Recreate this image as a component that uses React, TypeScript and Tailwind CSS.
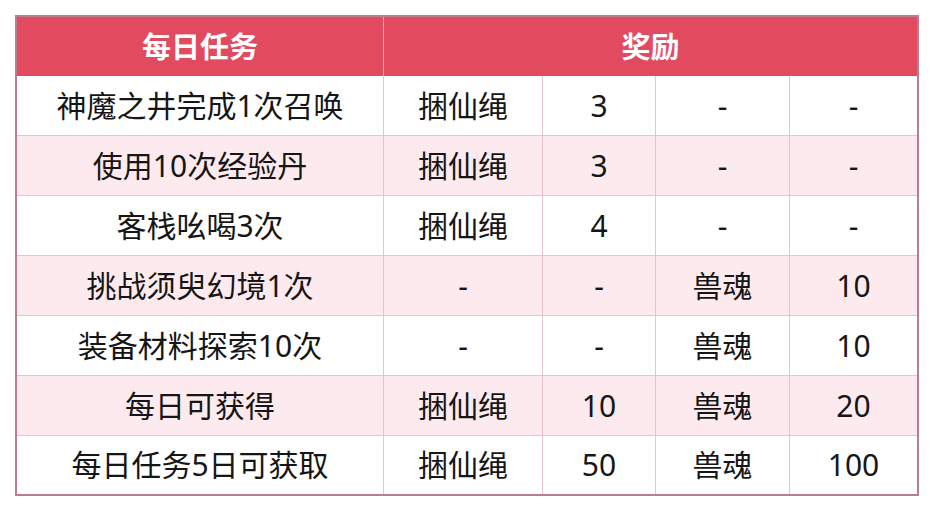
import React from "react";

const rows: string[][] = [
  ["神魔之井完成1次召唤", "捆仙绳", "3", "-", "-"],
  ["使用10次经验丹", "捆仙绳", "3", "-", "-"],
  ["客栈吆喝3次", "捆仙绳", "4", "-", "-"],
  ["挑战须臾幻境1次", "-", "-", "兽魂", "10"],
  ["装备材料探索10次", "-", "-", "兽魂", "10"],
  ["每日可获得", "捆仙绳", "10", "兽魂", "20"],
  ["每日任务5日可获取", "捆仙绳", "50", "兽魂", "100"],
];

export default function App() {
  return (
    <div
      className="w-[934px] h-[512px] bg-white pt-[15px] pl-[15px]"
      style={{ fontFamily: '"Noto Sans", "Noto Sans CJK SC", sans-serif' }}
    >
      <div className="w-[904px] border-2 border-[#bb7d8e]">
        <div className="grid grid-cols-[367px_159px_113px_134px_127px]">
          <div className="col-span-1 h-[59px] bg-[#e24b5f] text-white font-bold text-[29px] flex items-center justify-center border-r border-[#f1a5b1]">
            每日任务
          </div>
          <div className="col-span-4 h-[59px] bg-[#e24b5f] text-white font-bold text-[29px] flex items-center justify-center">
            奖励
          </div>
          {rows.map((r, i) => {
            const bg = i % 2 === 1 ? "bg-[#fdeaee]" : "bg-white";
            const last = i === rows.length - 1;
            return r.map((c, j) => (
              <div
                key={`${i}-${j}`}
                className={`${bg} ${last ? "h-[58px]" : "h-[60px] border-b"} ${
                  j < 4 ? "border-r" : ""
                } border-[#e8c3cc] flex items-center justify-center text-[30px] leading-none text-[#161616]`}
              >
                {c}
              </div>
            ));
          })}
        </div>
      </div>
    </div>
  );
}
